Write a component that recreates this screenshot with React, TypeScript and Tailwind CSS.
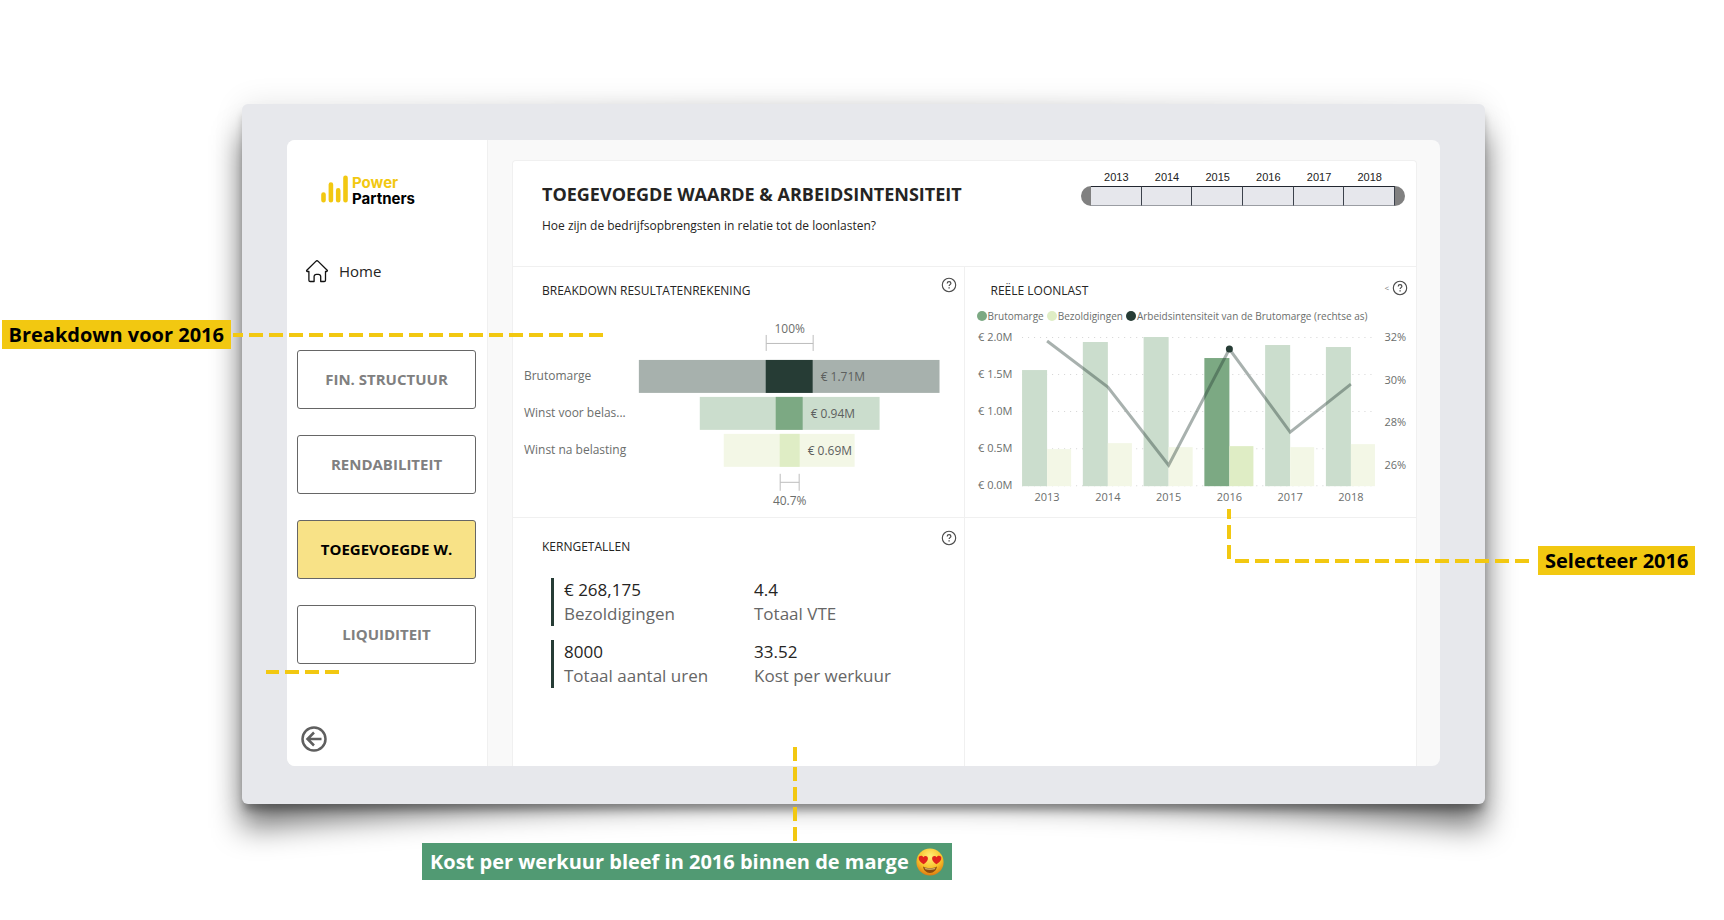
import React, { useState } from 'react';

interface YearPoint {
  year: number;
  margin: number;
  wages: number;
  line: number;
}

interface FunnelRow {
  label: string;
  value: string;
  x: number;
  width: number;
  innerX: number;
  innerWidth: number;
  light: string;
  dark: string;
}

// y positions inside the combo chart, baseline is 161
const points: YearPoint[] = [
  { year: 2013, margin: 45, wages: 124, line: 16 },
  { year: 2014, margin: 17, wages: 118, line: 62 },
  { year: 2015, margin: 12, wages: 122, line: 140 },
  { year: 2016, margin: 33, wages: 121, line: 24 },
  { year: 2017, margin: 20, wages: 122, line: 107 },
  { year: 2018, margin: 22, wages: 119, line: 59 },
];

const funnel: FunnelRow[] = [
  { label: 'Brutomarge', value: '€ 1.71M', x: 125, width: 301, innerX: 252, innerWidth: 47, light: '#a7b1ad', dark: '#263c35' },
  { label: 'Winst voor belas...', value: '€ 0.94M', x: 186, width: 180, innerX: 262, innerWidth: 27, light: '#cbddcd', dark: '#7ca983' },
  { label: 'Winst na belasting', value: '€ 0.69M', x: 210, width: 131, innerX: 266, innerWidth: 20, light: '#f3f7e6', dark: '#dfedc5' },
];

const navItems = ['FIN. STRUCTUUR', 'RENDABILITEIT', 'TOEGEVOEGDE W.', 'LIQUIDITEIT'];

const legend = [
  { label: 'Brutomarge', dot: 'bg-[#7ca983]' },
  { label: 'Bezoldigingen', dot: 'bg-[#dfedc5]' },
  { label: 'Arbeidsintensiteit van de Brutomarge (rechtse as)', dot: 'bg-[#263c35]' },
];

const metrics = [
  [
    { value: '€ 268,175', label: 'Bezoldigingen' },
    { value: '4.4', label: 'Totaal VTE' },
  ],
  [
    { value: '8000', label: 'Totaal aantal uren' },
    { value: '33.52', label: 'Kost per werkuur' },
  ],
];

const HelpButton: React.FC = () => (
  <button type="button" aria-label="Help" className="block size-4">
    <svg viewBox="0 0 16 16" className="size-4" fill="none" stroke="#4a4a4a">
      <circle cx="8" cy="8" r="6.7" strokeWidth="1.1" />
      <path d="M6.2 6.5c0-1.1.8-1.8 1.9-1.8s1.8.7 1.8 1.6c0 1.3-1.8 1.4-1.8 2.8" strokeWidth="1.2" />
      <path d="M8.1 10.3v1.3" strokeWidth="1.3" />
    </svg>
  </button>
);

const Logo: React.FC = () => (
  <div className="flex gap-1">
    <svg viewBox="0 0 28 28" className="size-7" stroke="#f2c811" strokeWidth="4.6" strokeLinecap="round">
      <path d="M3.5 19.6v5.6M10.9 9.5v15.7M18.2 15.4v9.8M25.5 2.8v22.4" />
    </svg>
    <div className="font-[Inter,sans-serif] text-[15px] leading-4 font-bold">
      <div className="text-[#f2c811]">Power</div>
      <div className="text-black">Partners</div>
    </div>
  </div>
);

const HeartEyes: React.FC = () => (
  <svg viewBox="0 0 28 28" className="size-7" role="img" aria-label="heart eyes">
    <defs>
      <radialGradient id="face" cx="50%" cy="30%" r="70%">
        <stop offset="0" stopColor="#fff07a" />
        <stop offset="0.6" stopColor="#f9c22b" />
        <stop offset="1" stopColor="#dd7a10" />
      </radialGradient>
    </defs>
    <circle cx="14" cy="14" r="13.6" fill="url(#face)" />
    <path d="M7.6 16.2C4.6 14.4 2.3 12.2 2.7 9.8c.4-2.2 3.3-2.7 4.6-.6 1.5-1.9 4.4-1.2 4.6 1 .2 2.2-1.9 4.4-4.3 6z" fill="#e0231c" />
    <path d="M20.4 16.2c3-1.8 5.3-4 4.9-6.4-.4-2.2-3.3-2.7-4.6-.6-1.5-1.9-4.4-1.2-4.6 1-.2 2.2 1.9 4.4 4.3 6z" fill="#e0231c" />
    <path d="M7 18.6c2 1.2 4.4 1.7 7 1.7s5-.5 7-1.7c-.5 3.7-3.3 6.4-7 6.4s-6.5-2.7-7-6.4z" fill="#8a4b0f" />
    <path d="M8.5 19.6c3.4 1.3 7.6 1.3 11 0l-.6 1.7c-3 1-6.8 1-9.8 0z" fill="#c9a860" />
  </svg>
);

const YearSlicer: React.FC = () => (
  <div className="w-[324px]">
    <div className="flex px-[10px] font-[Liberation_Sans,Arial,sans-serif] text-[11px] leading-4 text-[#222]">
      {points.map(p => (
        <span key={p.year} className="flex-1 text-center">{p.year}</span>
      ))}
    </div>
    <div className="mt-px flex h-5 overflow-hidden rounded-full bg-[#808080] px-[10px]">
      {points.map(p => (
        <button
          key={p.year}
          type="button"
          aria-label={`${p.year}`}
          className="flex-1 border-t border-r border-b border-t-[#222730] border-r-[#3c424c] border-b-[#9a9da3] bg-[#e6e7ec]"
        />
      ))}
    </div>
  </div>
);

const FunnelChart: React.FC = () => (
  <svg viewBox="-1 0 451 206" className="block w-full text-xs" fill="#6b6e6c">
    <text x="276" y="26" textAnchor="middle">100%</text>
    <path d="M252.5 28v16M299.5 28v16M252.5 36.5h47" stroke="#bdbdbd" />
    {funnel.map((row, i) => (
      <g key={row.label} transform={`translate(0 ${53 + i * 37})`}>
        <text x="10" y="20">{row.label}</text>
        <rect x={row.x} width={row.width} height="33" fill={row.light} />
        <rect x={row.innerX} width={row.innerWidth} height="33" fill={row.dark} />
        <text x={row.innerX + row.innerWidth + 8} y="21" fill="#5d605e">{row.value}</text>
      </g>
    ))}
    <path d="M266.5 167v17M285.5 167v17M266.5 175.5h19" stroke="#bdbdbd" />
    <text x="276" y="198" textAnchor="middle">40.7%</text>
  </svg>
);

const ComboChart: React.FC<{ selected: number }> = ({ selected }) => {
  const centre = (i: number) => 82 + i * 60.7;

  return (
    <svg viewBox="0 0 451 184" className="block w-full text-[11px]" fill="#6b6e6c">
      {['€ 2.0M', '€ 1.5M', '€ 1.0M', '€ 0.5M', '€ 0.0M'].map((label, i) => (
        <g key={label}>
          <line x1="57" x2="410" y1={12.5 + i * 37} y2={12.5 + i * 37} stroke="#d4d4d4" strokeDasharray="1 5" />
          <text x="13" y={16 + i * 37}>{label}</text>
        </g>
      ))}
      {['32%', '30%', '28%', '26%'].map((label, i) => (
        <text key={label} x="419" y={16 + i * 42.5}>{label}</text>
      ))}
      {points.map((p, i) => {
        const active = p.year === selected;
        return (
          <g key={p.year}>
            <rect x={centre(i) - 25} y={p.margin} width="25" height={161 - p.margin} fill={active ? '#7ca983' : '#cbddcd'} />
            <rect x={centre(i)} y={p.wages} width="24" height={161 - p.wages} fill={active ? '#dfedc5' : '#f3f7e6'} />
            <text x={centre(i)} y="176" textAnchor="middle">{p.year}</text>
          </g>
        );
      })}
      <polyline
        points={points.map((p, i) => `${centre(i)},${p.line}`).join(' ')}
        fill="none"
        stroke="#263c35"
        strokeOpacity="0.4"
        strokeWidth="3"
      />
      {points.map((p, i) => p.year === selected && (
        <circle key={p.year} cx={centre(i)} cy={p.line} r="3.5" fill="#263c35" />
      ))}
    </svg>
  );
};

// Curved drop shadow: deep in the bottom corners, thin in the middle
const CardShadow: React.FC = () => (
  <svg
    viewBox="0 0 100 100"
    preserveAspectRatio="none"
    className="absolute inset-0 size-full overflow-visible blur-[15px]"
    aria-hidden="true"
  >
    <path d="M0 4.5Q50 1 100 4.5V103.5Q50 95 0 103.5Z" fill="#000" fillOpacity="0.52" />
  </svg>
);

const Callouts: React.FC = () => (
  <div className="font-[Open_Sans,sans-serif] text-xl font-bold text-black">
    <div className="absolute top-[216px] right-full mr-[11px] bg-[#f2c811] px-[7px] leading-[29px] whitespace-nowrap">
      Breakdown voor 2016
    </div>
    <div className="absolute top-[229px] -left-[9px] h-1 w-[370px] bg-[repeating-linear-gradient(to_left,#f2c811_0_14px,transparent_14px_20px)]" />

    <div className="absolute top-[566px] left-6 h-1 w-[73px] bg-[repeating-linear-gradient(to_left,#f2c811_0_14px,transparent_14px_20px)]" />

    <div className="absolute top-[405px] right-[254px] h-[50px] w-1 bg-[repeating-linear-gradient(to_top,#f2c811_0_14px,transparent_14px_20px)]" />
    <div className="absolute top-[455px] -right-11 h-1 w-[294px] bg-[repeating-linear-gradient(to_right,#f2c811_0_14px,transparent_14px_20px)]" />
    <div className="absolute top-[442px] left-full ml-[53px] bg-[#f2c811] px-[7px] leading-[29px] whitespace-nowrap">
      Selecteer 2016
    </div>

    <div className="absolute top-[643px] left-[551px] h-[95px] w-1 bg-[repeating-linear-gradient(to_bottom,#f2c811_0_14px,transparent_14px_20px)]" />
    <div className="absolute top-[739px] left-[180px] flex h-[37px] items-center gap-[7px] bg-[#519a73] px-2 whitespace-nowrap text-white">
      Kost per werkuur bleef in 2016 binnen de marge
      <HeartEyes />
    </div>
  </div>
);

const App: React.FC = () => {
  const [active, setActive] = useState('TOEGEVOEGDE W.');

  return (
    <main className="min-h-screen overflow-hidden bg-white pt-[104px] pr-[239px] pb-[116px] pl-[242px] font-[Open_Sans,sans-serif] text-[#252423]">
      <div className="relative">
        <CardShadow />
        <div className="relative rounded-md bg-[#e7e8ec] px-[45px] pt-9 pb-[38px] shadow-[0_8px_8px_-2px_rgba(0,0,0,0.3),0_0_30px_rgba(0,0,0,0.1)]">
          <div className="flex h-[626px] overflow-hidden rounded-lg bg-[#f9f9f9]">
            <aside className="flex w-[201px] shrink-0 flex-col border-r border-[#f0f0f0] bg-white pt-[35px] pr-[11px] pb-[14px] pl-[10px]">
              <div className="pl-[23px]">
                <Logo />
              </div>
              <a href="#home" className="mt-[52px] flex items-center gap-[10px] pl-2 text-[15px] leading-6">
                <svg viewBox="0 0 24 24" className="size-6" fill="none" stroke="#111" strokeWidth="1.3" strokeLinejoin="round" strokeLinecap="round">
                  <path d="M1.8 11.2 10.8 2.4a1.7 1.7 0 0 1 2.4 0l9 8.8c.5.6.1 1.3-.6 1.3h-1.1v8.7a1.3 1.3 0 0 1-1.3 1.3h-3.5v-5a2.2 2.2 0 0 0-2.2-2.2h-2.2a2.2 2.2 0 0 0-2.2 2.2v5H5.2a1.3 1.3 0 0 1-1.3-1.3v-8.7H2.4c-.8 0-1.1-.8-.6-1.3z" />
                </svg>
                Home
              </a>
              <nav className="mt-[67px] flex flex-col gap-[26px]">
                {navItems.map(item => (
                  <button
                    key={item}
                    type="button"
                    onClick={() => setActive(item)}
                    className={`h-[59px] rounded-[3px] border border-[#666] text-[15px] font-bold ${
                      active === item ? 'bg-[#f8e287] text-black' : 'bg-white text-[#808080]'
                    }`}
                  >
                    {item}
                  </button>
                ))}
              </nav>
              <button type="button" aria-label="Terug" className="mt-auto ml-1 size-[26px]">
                <svg viewBox="0 0 26 26" className="size-[26px]" fill="none" stroke="#5f5f5f" strokeWidth="2.5">
                  <circle cx="13" cy="13" r="11.5" />
                  <path d="M20.5 13H6.5M13 6.5 6.5 13l6.5 6.5" />
                </svg>
              </button>
            </aside>

            <div className="flex min-w-0 flex-1 pt-5 pr-[23px] pl-6">
              <div className="flex min-w-0 flex-1 flex-col rounded-t border border-b-0 border-[#f0f0f0] bg-white">
                <header className="flex h-[106px] justify-between border-b border-[#f0f0f0] pr-[11px] pl-[29px]">
                  <div className="pt-[19px]">
                    <h1 className="text-lg leading-7 font-bold">TOEGEVOEGDE WAARDE &amp; ARBEIDSINTENSITEIT</h1>
                    <p className="mt-[6px] text-xs leading-6">Hoe zijn de bedrijfsopbrengsten in relatie tot de loonlasten?</p>
                  </div>
                  <div className="pt-2">
                    <YearSlicer />
                  </div>
                </header>

                <div className="grid flex-1 grid-cols-2 grid-rows-[251px_1fr]">
                  <section className="border-r border-b border-[#f0f0f0]">
                    <div className="flex h-10 items-start justify-between pt-[10px] pr-[7px] pl-[29px]">
                      <h2 className="pt-[5px] text-xs leading-[18px]">BREAKDOWN RESULTATENREKENING</h2>
                      <HelpButton />
                    </div>
                    <FunnelChart />
                  </section>

                  <section className="border-b border-[#f0f0f0]">
                    <div className="flex h-10 items-start justify-between pt-[13px] pr-2 pl-[26px]">
                      <h2 className="pt-[2px] text-xs leading-[18px]">REËLE LOONLAST</h2>
                      <div className="flex items-center gap-[3px] text-[8px] leading-4 text-[#777]">
                        &lt;
                        <HelpButton />
                      </div>
                    </div>
                    <ul className="flex h-[18px] items-center gap-[3px] pl-3 text-[10px] whitespace-nowrap text-[#6b6e6c]">
                      {legend.map(item => (
                        <li key={item.label} className="flex items-center gap-px">
                          <span className={`size-[10px] rounded-full ${item.dot}`} />
                          {item.label}
                        </li>
                      ))}
                    </ul>
                    <ComboChart selected={2016} />
                  </section>

                  <section className="border-r border-[#f0f0f0]">
                    <div className="flex items-start justify-between pt-3 pr-[7px] pl-[29px]">
                      <h2 className="pt-2 text-xs leading-[18px]">KERNGETALLEN</h2>
                      <HelpButton />
                    </div>
                    <div className="mt-[22px] flex flex-col gap-[14px] pl-[38px]">
                      {metrics.map(row => (
                        <div key={row[0].label} className="flex border-l-[3px] border-[#263c35] pl-[10px]">
                          {row.map(m => (
                            <div key={m.label} className="w-[190px] text-[17px] leading-6">
                              <div>{m.value}</div>
                              <div className="text-[#666]">{m.label}</div>
                            </div>
                          ))}
                        </div>
                      ))}
                    </div>
                  </section>

                  <section />
                </div>
              </div>
            </div>
          </div>
        </div>
        <Callouts />
      </div>
    </main>
  );
};

export default App;
